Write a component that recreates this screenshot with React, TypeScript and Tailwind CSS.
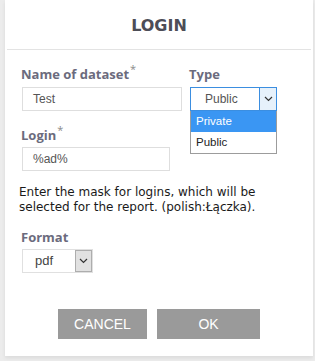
import React from 'react'

const Chevron = () => (
  <svg width="9" height="6" viewBox="0 0 9 6" fill="none">
    <path d="M1 1 L4.5 4.5 L8 1" stroke="#333" strokeWidth="1.2" />
  </svg>
)

const Label = ({ text, required = false }: { text: string; required?: boolean }) => (
  <div className="h-[16px] leading-[16px] text-[13px] font-bold text-[#6b6b7d] -ml-[1px] whitespace-nowrap" style={{ fontFamily: '"Open Sans", sans-serif' }}>
    {text}
    {required && <span className="relative -top-[6px] ml-[1px] text-[11px] font-normal text-[#8a8a8a]">*</span>}
  </div>
)

export default function App() {
  return (
    <div className="w-[315px] h-[361px] bg-[#ececec] overflow-hidden">
      <div className="ml-[5px] w-[308px] h-[356px] bg-white shadow-[0_2px_4px_rgba(0,0,0,0.08)] flex flex-col">
        <div className="h-[49px] pt-[3px] flex items-center justify-center">
          <span className="text-[16px] font-bold text-[#4d4d57]" style={{ fontFamily: '"DejaVu Sans", sans-serif' }}>LOGIN</span>
        </div>
        <div className="mx-[2px] h-px bg-[#e3e3e3]" />

        <div className="pl-[17px] pt-[16px] flex flex-col" style={{ fontFamily: '"Liberation Sans", Arial, sans-serif' }}>
          <div className="flex gap-[8px]">
            <div className="w-[160px]">
              <Label text="Name of dataset" required />
              <div className="mt-[5px] h-[24px] border border-[#dedede] flex items-center pl-[10px] text-[12px] text-[#555]">Test</div>
            </div>
            <div className="w-[87px] relative">
              <Label text="Type" />
              <div className="mt-[5px] h-[24px] border border-[#3b8ee0] flex">
                <div className="flex-1 flex items-center pl-[14px] text-[12px] text-[#555]">Public</div>
                <div className="w-[17px] bg-[#e6f1fb] border-l border-[#3b8ee0] flex items-center justify-center">
                  <Chevron />
                </div>
              </div>
              <div className="absolute left-0 top-full w-[87px] border border-t-0 border-[#9c9c9c] bg-white text-[11.5px]">
                <div className="h-[21px] bg-[#3a96f3] text-white flex items-center pl-[5px]">Private</div>
                <div className="h-[21px] text-[#222] flex items-center pl-[5px]">Public</div>
              </div>
            </div>
          </div>

          <div className="mt-[16px]">
            <Label text="Login" required />
            <div className="mt-[4px] w-[148px] h-[24px] border border-[#dedede] flex items-center pl-[10px] text-[12px] text-[#555]">%ad%</div>
          </div>

          <p className="mt-[14px] -ml-[3px] text-[12px] leading-[15px] text-[#1a1a1a]" style={{ fontFamily: '"DejaVu Sans", sans-serif' }}>
            Enter the mask for logins, which will be<br />selected for the report. (polish:Łączka).
          </p>

          <div className="mt-[14px]">
            <Label text="Format" />
            <div className="mt-[4px] w-[71px] h-[24px] border border-[#e0e0e0] flex">
              <div className="flex-1 flex items-center pl-[12px] text-[13px] text-[#444]">pdf</div>
              <div className="w-[17px] bg-[#e1e1e1] border border-[#adadad] flex items-center justify-center">
                <Chevron />
              </div>
            </div>
          </div>

          <div className="mt-[36px] -ml-[17px] flex justify-center gap-[10px]">
            <button className="w-[89px] h-[30px] bg-[#9a9a9a] text-white text-[14px]">CANCEL</button>
            <button className="w-[103px] h-[30px] bg-[#9a9a9a] text-white text-[14px]">OK</button>
          </div>
        </div>
      </div>
    </div>
  )
}
